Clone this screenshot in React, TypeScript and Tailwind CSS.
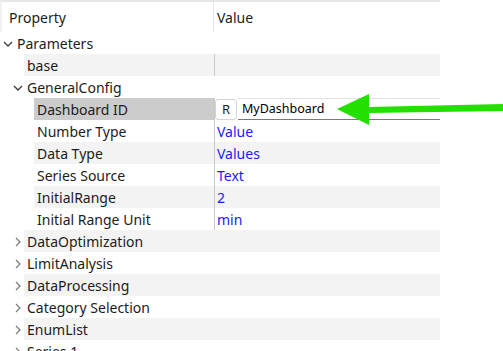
import React from "react";

type RowProps = {
  indent: number;
  label: string;
  value?: string;
  chevron?: "open" | "closed";
  gray?: boolean;
  selected?: boolean;
  divider?: boolean;
  children?: React.ReactNode;
};

const ChevronOpen = () => (
  <svg width="10" height="10" viewBox="0 0 10 10" className="block">
    <path d="M1 3 L5 7 L9 3" fill="none" stroke="#3a3a3a" strokeWidth="1.3" />
  </svg>
);

const ChevronClosed = () => (
  <svg width="10" height="10" viewBox="0 0 10 10" className="block">
    <path d="M3 1 L7 5 L3 9" fill="none" stroke="#7a7a7a" strokeWidth="1.2" />
  </svg>
);

const Row: React.FC<RowProps> = ({ indent, label, value, chevron, gray, selected, divider, children }) => {
  const bg = gray ? "bg-[#f3f3f3]" : "bg-white";
  return (
    <div className="flex h-[22px]">
      <div className="flex shrink-0 items-center justify-end bg-white pt-[1px]" style={{ width: indent }}>
        {chevron && (
          <div className="mr-[1px] flex w-[10px] justify-center">
            {chevron === "open" ? <ChevronOpen /> : <ChevronClosed />}
          </div>
        )}
      </div>
      <div className={`flex flex-1 ${bg}`}>
        <div
          className={`flex h-full shrink-0 items-center pl-[3px] pt-[2px] text-[#1c1c1c] ${selected ? "bg-[#cccccc]" : ""}`}
          style={{ width: divider ? 214 - indent : undefined }}
        >
          {label}
        </div>
        {divider && (
          <div className="flex flex-1 items-center border-l border-[#c8c8c8] pl-[2px] pt-[2px] text-[#1a1aff]">
            {children ?? value}
          </div>
        )}
      </div>
    </div>
  );
};

export default function App() {
  return (
    <div
      className="relative h-[351px] w-[503px] overflow-hidden bg-white text-[14px] leading-none"
      style={{ fontFamily: '"Segoe UI", "Noto Sans", sans-serif' }}
    >
      <div className="w-[440px] border-l-2 border-t-2 border-l-[#f1f1f1] border-t-[#e6e6e6]">
        <div className="flex h-[30px] items-center text-[#1c1c1c]">
          <div className="w-[211px] pl-[7px] pt-[2px]">Property</div>
          <div className="flex h-full flex-1 items-center border-l border-[#e8e8e8] pl-[3px] pt-[2px]">Value</div>
        </div>
        <div className="-ml-[2px]">
          <Row indent={14} label="Parameters" chevron="open" />
          <Row indent={24} label="base" gray divider value="" />
          <Row indent={24} label="GeneralConfig" chevron="open" />
          <Row indent={34} label="Dashboard ID" selected divider>
            <div className="-mt-[2px] flex h-[22px] flex-1 items-center">
              <div className="ml-[-2px] flex h-[21px] w-[22px] items-center justify-center rounded-[3px] border border-[#d4d4d4] bg-white pt-[1px] text-[13px] text-[#1c1c1c]">
                R
              </div>
              <div className="ml-[1px] flex h-full flex-1 items-center border-b border-t border-b-[#7a7a7a] border-t-[#e2e2e2] pl-[4px] pt-[1px] text-[12.5px] text-black">
                MyDashboard
              </div>
            </div>
          </Row>
          <Row indent={34} label="Number Type" divider value="Value" />
          <Row indent={34} label="Data Type" gray divider value="Values" />
          <Row indent={34} label="Series Source" divider value="Text" />
          <Row indent={34} label="InitialRange" gray divider value="2" />
          <Row indent={34} label="Initial Range Unit" divider value="min" />
          <Row indent={24} label="DataOptimization" chevron="closed" gray />
          <Row indent={24} label="LimitAnalysis" chevron="closed" />
          <Row indent={24} label="DataProcessing" chevron="closed" gray />
          <Row indent={24} label="Category Selection" chevron="closed" />
          <Row indent={24} label="EnumList" chevron="closed" gray />
          <Row indent={24} label="Series 1" chevron="closed" />
        </div>
      </div>
      <svg className="absolute left-0 top-0" width="503" height="351" viewBox="0 0 503 351">
        <polygon points="368,107 503,104 503,111 368,113" fill="#24e000" />
        <polygon points="337,109 369,94 369,125" fill="#24e000" />
      </svg>
    </div>
  );
}
